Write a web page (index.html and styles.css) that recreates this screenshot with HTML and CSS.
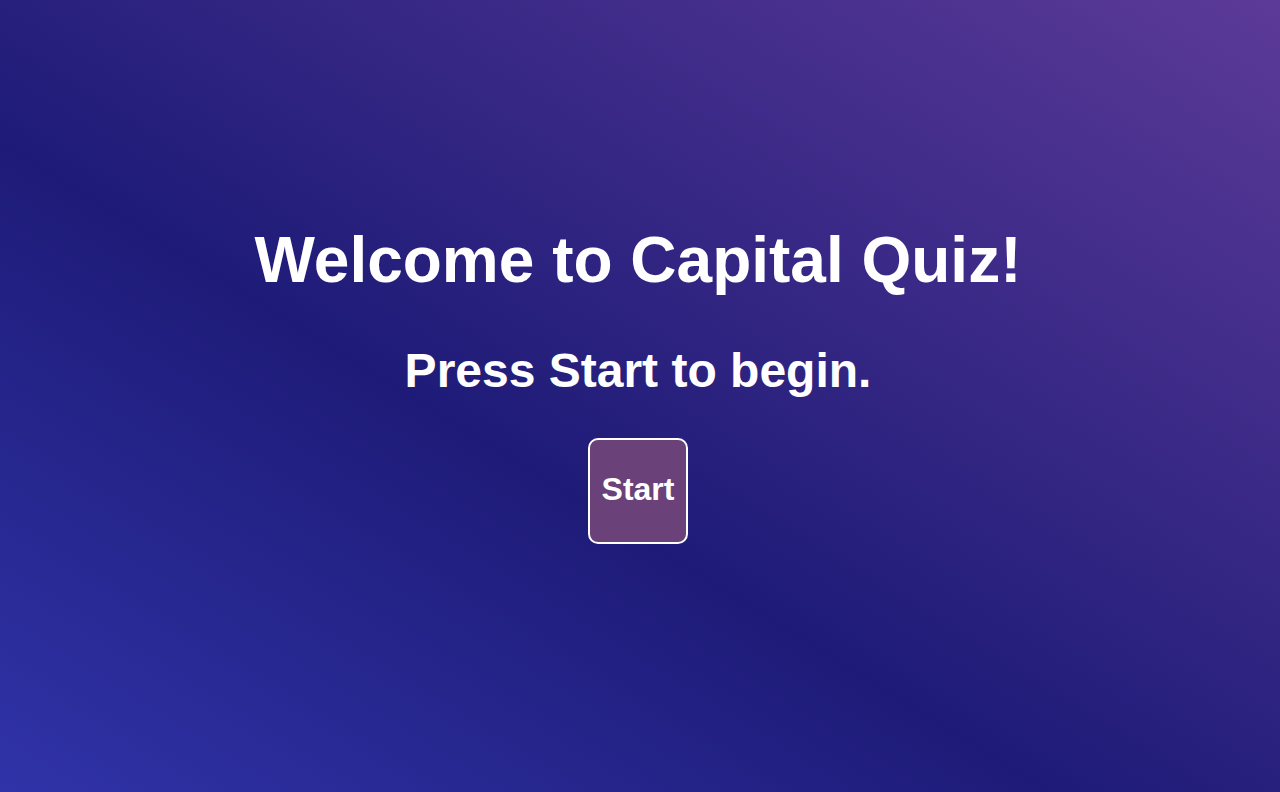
FILE: index.html
```html
<!DOCTYPE html>
<html lang="en">
<head>
<meta charset="utf-8">
<title>Capital Quiz</title>
<link rel="stylesheet" href="styles.css">
</head>
<body>
<main class="screen">
  <h1 class="title">Welcome to Capital Quiz!</h1>
  <h2 class="subtitle">Press Start to begin.</h2>
  <button class="start-btn" type="button">Start</button>
</main>
</body>
</html>
```

FILE: styles.css
```css
html, body {
  margin: 0;
  height: 100%;
}
body {
  font-family: "Liberation Sans", Arial, sans-serif;
  color: #ffffff;
  background: linear-gradient(to top right, #3033a8 0%, #1e1b78 41%, #5c3a98 100%);
  background-attachment: fixed;
}
.screen {
  min-height: 100vh;
  box-sizing: border-box;
  display: flex;
  flex-direction: column;
  align-items: center;
  justify-content: center;
  padding: 0 4px 25px 0;
}
.title {
  margin: 0;
  font-size: 64px;
  font-weight: 700;
  line-height: normal;
}
.subtitle {
  margin: 46px 0 0;
  font-size: 48px;
  font-weight: 700;
  line-height: normal;
}
.start-btn {
  margin-top: 40px;
  width: 100px;
  height: 106px;
  padding: 0 0 3px;
  box-sizing: border-box;
  border: 2px solid #ffffff;
  border-radius: 10px;
  background: #6a4279;
  color: #ffffff;
  font-family: "Liberation Sans", Arial, sans-serif;
  font-size: 32px;
  font-weight: 700;
  cursor: pointer;
}
```
